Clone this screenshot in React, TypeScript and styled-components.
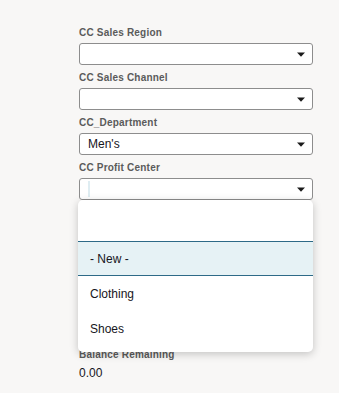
import React from "react";
import styled, { createGlobalStyle } from "styled-components";

const Global = createGlobalStyle`
  html, body { margin: 0; padding: 0; background: #f8f7f6; }
  body { font-family: "Liberation Sans", Arial, sans-serif; }
`;

const Page = styled.div`
  display: flex;
  flex-direction: column;
  padding: 27px 0 0 79px;
  width: 234px;
  min-height: 366px;
`;

const Field = styled.div<{ $top?: number }>`
  position: relative;
  display: flex;
  flex-direction: column;
  gap: 4px;
  margin-top: ${(p) => p.$top ?? 0}px;
  margin-bottom: 7px;
`;

const Label = styled.div`
  font-size: 10px;
  line-height: 12px;
  font-weight: 700;
  letter-spacing: 0.2px;
  color: #5b5b5b;
  white-space: nowrap;
`;

const SelectBox = styled.div`
  box-sizing: border-box;
  height: 22px;
  display: flex;
  align-items: center;
  padding: 0 7px 0 8px;
  background: #ffffff;
  border: 1px solid #8d8d8d;
  border-radius: 3px;
`;

const Value = styled.span`
  flex: 1;
  font-size: 12px;
  color: #16151c;
`;

const Caret = styled.span`
  width: 2px;
  height: 16px;
  background: #dfedf2;
  margin-right: auto;
`;

const Arrow = styled.svg`
  width: 8px;
  height: 5px;
  flex: none;
`;

const Menu = styled.div`
  position: absolute;
  top: 100%;
  left: -1px;
  width: 235px;
  box-sizing: border-box;
  padding: 6px 0;
  background: #ffffff;
  border-radius: 5px;
  box-shadow: 0 2px 8px rgba(0, 0, 0, 0.22);
  z-index: 5;
`;

const Option = styled.div<{ $active?: boolean }>`
  box-sizing: border-box;
  height: 35px;
  display: flex;
  align-items: center;
  padding: 0 12px;
  font-size: 12px;
  color: #16151c;
  border-top: 1px solid ${(p) => (p.$active ? "#2d6a87" : "transparent")};
  border-bottom: 1px solid ${(p) => (p.$active ? "#2d6a87" : "transparent")};
  background: ${(p) => (p.$active ? "#e6f2f5" : "transparent")};
`;

const Amount = styled.div`
  font-size: 12px;
  line-height: 16px;
  color: #16151c;
`;

const DownArrow = () => (
  <Arrow viewBox="0 0 8 5">
    <path d="M0 0.5 H8 L4 4.8 Z" fill="#1a1a1a" />
  </Arrow>
);

const Select = ({ value, focused }: { value?: string; focused?: boolean }) => (
  <SelectBox>
    {focused ? <Caret /> : <Value>{value ?? ""}</Value>}
    <DownArrow />
  </SelectBox>
);

export default function App() {
  return (
    <>
      <Global />
      <Page>
        <Field>
          <Label>CC Sales Region</Label>
          <Select />
        </Field>
        <Field>
          <Label>CC Sales Channel</Label>
          <Select />
        </Field>
        <Field>
          <Label>CC_Department</Label>
          <Select value="Men's" />
        </Field>
        <Field>
          <Label>CC Profit Center</Label>
          <Select focused />
          <Menu>
            <Option />
            <Option $active>- New -</Option>
            <Option>Clothing</Option>
            <Option>Shoes</Option>
          </Menu>
        </Field>
        <Field $top={142}>
          <Label>Balance Remaining</Label>
          <Amount>0.00</Amount>
        </Field>
      </Page>
    </>
  );
}
